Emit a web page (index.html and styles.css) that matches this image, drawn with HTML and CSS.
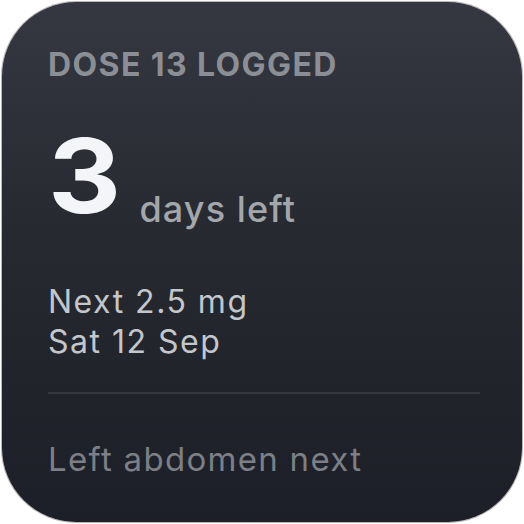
FILE: index.html
```html
<!DOCTYPE html>
<html lang="en">
<head>
    <meta charset="UTF-8">
    <meta name="viewport" content="width=device-width, initial-scale=1.0">
    <title>Dose Widget</title>
    <link rel="stylesheet" href="styles.css">
</head>
<body>

    <!-- Dose widget -->
    <div class="widget">
        <div class="widget-title">DOSE 13 LOGGED</div>

        <div class="countdown">
            <span class="count-number">3</span>
            <span class="count-label">days left</span>
        </div>

        <div class="next-dose">
            <div>Next 2.5 mg</div>
            <div>Sat 12 Sep</div>
        </div>

        <div class="divider"></div>

        <div class="site-note">Left abdomen next</div>
    </div>

</body>
</html>
```

FILE: styles.css
```css
* {
    margin: 0;
    padding: 0;
    box-sizing: border-box;
}

body {
    font-family: Inter, "Noto Sans", sans-serif;
    background-color: #ffffff;
}

/* Widget card */
.widget {
    width: 520px;
    height: 520px;
    margin: 2px;
    padding: 43px 42px 0 46px;
    border-radius: 74px;
    background: linear-gradient(180deg, #353841 0%, #262930 45%, #1c1f27 100%);
    box-shadow: 0 0 0 1px rgba(70, 40, 45, 0.35);
    display: flex;
    flex-direction: column;
}

.widget-title {
    font-size: 32px;
    line-height: 40px;
    font-weight: 700;
    letter-spacing: 1.4px;
    color: #8b8e94;
}

/* Big number row */
.countdown {
    display: flex;
    align-items: flex-end;
    gap: 25px;
    margin-top: 41px;
}

.count-number {
    display: inline-block;
    font-size: 103px;
    line-height: 100px;
    font-weight: 700;
    color: #f3f5f9;
    transform: scaleX(1.1);
    transform-origin: left bottom;
}

.count-label {
    font-size: 36px;
    line-height: 34px;
    font-weight: 500;
    letter-spacing: 1.1px;
    color: #a3a6ab;
}

.next-dose {
    margin-top: 56px;
    font-size: 32px;
    line-height: 40px;
    letter-spacing: 1.5px;
    color: #c3c6cb;
}

.divider {
    height: 2px;
    margin-top: 30px;
    background-color: #363941;
}

.site-note {
    margin-top: 45px;
    font-size: 33px;
    line-height: 40px;
    letter-spacing: 1.3px;
    color: #7c7f86;
}
```
